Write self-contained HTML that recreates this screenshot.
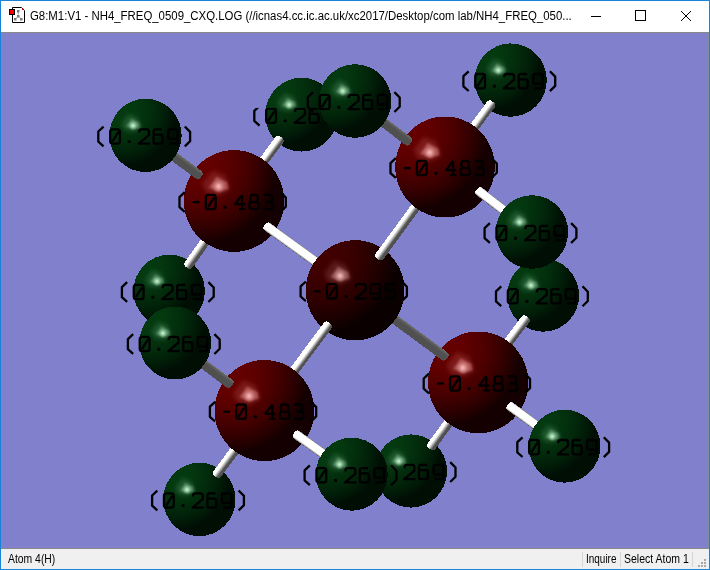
<!DOCTYPE html>
<html><head><meta charset="utf-8">
<style>
html,body{margin:0;padding:0;}
body{width:710px;height:570px;overflow:hidden;position:relative;background:#1883d7;font-family:"Liberation Sans",sans-serif;}
#title{position:absolute;left:1px;top:1px;width:708px;height:31px;background:#fff;}
#tline{position:absolute;left:1px;top:32px;width:708px;height:1px;background:#8a8a8a;}
#view{position:absolute;left:1px;top:33px;width:708px;height:515px;background:#8a8a8a;}
#view svg{position:absolute;left:1px;top:0;}
#bline{position:absolute;left:1px;top:548px;width:708px;height:1px;background:#8a8a8a;}
#status{position:absolute;left:1px;top:549px;width:708px;height:20px;background:#f0f0f0;font-size:12px;color:#000;}
.tt{position:absolute;left:29px;top:8px;font-size:12px;white-space:nowrap;color:#000;transform-origin:0 0;transform:scaleX(0.95);}
.lb path{fill:none;stroke:#000;stroke-width:2.3;stroke-linecap:butt;stroke-linejoin:round;}
.lb .dot rect{fill:#000;}
.st{position:absolute;top:3px;white-space:nowrap;transform-origin:0 0;}
.sep{position:absolute;top:3px;width:1px;height:15px;background:#d5d5d5;}
.grip{position:absolute;width:2px;height:2px;background:#a8a8a8;}
</style></head><body>
<div id="title">
 <svg style="position:absolute;left:-1px;top:-1px" width="32" height="32" viewBox="0 0 32 32">
  <path d="M12.5 7.5 H21.5 L24.5 10.5 V22.5 H12.5 Z" fill="#fff" stroke="#000" stroke-width="1"/>
  <rect x="22" y="8.5" width="1.5" height="1.5" fill="#e00"/>
  <path d="M18.2 11.5 V16 L15.2 19.2 M18.2 16 L21.3 19.2" stroke="#b0b0b0" stroke-width="1" fill="none"/>
  <rect x="17" y="10" width="2.5" height="2.5" fill="#7a7a7a"/><rect x="17" y="15" width="2.5" height="2.5" fill="#7a7a7a"/>
  <rect x="14" y="18" width="2.5" height="2.5" fill="#7a7a7a"/><rect x="20" y="18" width="2.5" height="2.5" fill="#7a7a7a"/>
  <rect x="9.5" y="9.5" width="5" height="5" fill="#f00" stroke="#000" stroke-width="1"/>
 </svg>
 <div class="tt">G8:M1:V1 - NH4_FREQ_0509_CXQ.LOG (//icnas4.cc.ic.ac.uk/xc2017/Desktop/com lab/NH4_FREQ_050...</div>
 <svg style="position:absolute;left:0;top:0" width="708" height="31">
  <path d="M590 15.5 H600" stroke="#000" stroke-width="1"/>
  <rect x="634.5" y="9.5" width="10" height="10" fill="none" stroke="#000" stroke-width="1"/>
  <path d="M680 10 L690 20 M690 10 L680 20" stroke="#000" stroke-width="1"/>
 </svg>
</div>
<div id="tline"></div>
<div id="view"><svg width="706" height="515" viewBox="2 33 706 515" style="display:block">
<defs>
<filter id="blur2" x="-50%" y="-50%" width="200%" height="200%"><feGaussianBlur stdDeviation="2.2"/></filter><filter id="blur1" x="-50%" y="-50%" width="200%" height="200%"><feGaussianBlur stdDeviation="1.3"/></filter>
<clipPath id="cpH2" clipPathUnits="userSpaceOnUse"><path clip-rule="evenodd" d="M0,0H710V570H0ZM305.5,60H410V112H305.5Z"/></clipPath>
<radialGradient id="gn" cx="0.168" cy="0.168" r="0.754" fx="0.168" fy="0.168"><stop offset="0.0" stop-color="rgb(98,0,0)"/><stop offset="0.1" stop-color="rgb(100,0,0)"/><stop offset="0.2" stop-color="rgb(98,0,0)"/><stop offset="0.3" stop-color="rgb(94,0,0)"/><stop offset="0.4" stop-color="rgb(88,0,0)"/><stop offset="0.5" stop-color="rgb(80,0,0)"/><stop offset="0.6" stop-color="rgb(71,0,0)"/><stop offset="0.7" stop-color="rgb(60,0,0)"/><stop offset="0.8" stop-color="rgb(48,0,0)"/><stop offset="0.9" stop-color="rgb(35,0,0)"/><stop offset="1.0" stop-color="rgb(20,0,0)"/></radialGradient>
<radialGradient id="gc" cx="0.168" cy="0.168" r="0.754" fx="0.168" fy="0.168"><stop offset="0.0" stop-color="rgb(63,0,0)"/><stop offset="0.1" stop-color="rgb(65,0,0)"/><stop offset="0.2" stop-color="rgb(63,0,0)"/><stop offset="0.3" stop-color="rgb(61,0,0)"/><stop offset="0.4" stop-color="rgb(56,0,0)"/><stop offset="0.5" stop-color="rgb(51,0,0)"/><stop offset="0.6" stop-color="rgb(45,0,0)"/><stop offset="0.7" stop-color="rgb(37,0,0)"/><stop offset="0.8" stop-color="rgb(29,0,0)"/><stop offset="0.9" stop-color="rgb(20,0,0)"/><stop offset="1.0" stop-color="rgb(10,0,0)"/></radialGradient>
<radialGradient id="gh" cx="0.168" cy="0.168" r="0.754" fx="0.168" fy="0.168"><stop offset="0.0" stop-color="rgb(4,57,15)"/><stop offset="0.1" stop-color="rgb(4,58,16)"/><stop offset="0.2" stop-color="rgb(4,57,15)"/><stop offset="0.3" stop-color="rgb(4,55,15)"/><stop offset="0.4" stop-color="rgb(3,51,14)"/><stop offset="0.5" stop-color="rgb(3,47,13)"/><stop offset="0.6" stop-color="rgb(2,42,11)"/><stop offset="0.7" stop-color="rgb(2,36,10)"/><stop offset="0.8" stop-color="rgb(1,30,8)"/><stop offset="0.9" stop-color="rgb(1,22,6)"/><stop offset="1.0" stop-color="rgb(0,14,4)"/></radialGradient>
<radialGradient id="sn" cx="0.5" cy="0.5" r="0.5"><stop offset="0" stop-color="#ffc0c0" stop-opacity="0.900"/><stop offset="0.2" stop-color="#ffc0c0" stop-opacity="0.765"/><stop offset="0.45" stop-color="#ffc0c0" stop-opacity="0.450"/><stop offset="0.75" stop-color="#ffc0c0" stop-opacity="0.135"/><stop offset="1.0" stop-color="#ffc0c0" stop-opacity="0.000"/></radialGradient>
<radialGradient id="sc" cx="0.5" cy="0.5" r="0.5"><stop offset="0" stop-color="#ffc8c8" stop-opacity="0.850"/><stop offset="0.2" stop-color="#ffc8c8" stop-opacity="0.722"/><stop offset="0.45" stop-color="#ffc8c8" stop-opacity="0.425"/><stop offset="0.75" stop-color="#ffc8c8" stop-opacity="0.128"/><stop offset="1.0" stop-color="#ffc8c8" stop-opacity="0.000"/></radialGradient>
<radialGradient id="sh" cx="0.5" cy="0.5" r="0.5"><stop offset="0" stop-color="#c8f8d0" stop-opacity="0.950"/><stop offset="0.2" stop-color="#c8f8d0" stop-opacity="0.807"/><stop offset="0.45" stop-color="#c8f8d0" stop-opacity="0.475"/><stop offset="0.75" stop-color="#c8f8d0" stop-opacity="0.142"/><stop offset="1.0" stop-color="#c8f8d0" stop-opacity="0.000"/></radialGradient>
<radialGradient id="sng" cx="0.5" cy="0.5" r="0.5"><stop offset="0" stop-color="#e07070" stop-opacity="0.400"/><stop offset="0.3" stop-color="#e07070" stop-opacity="0.320"/><stop offset="0.6" stop-color="#e07070" stop-opacity="0.160"/><stop offset="1.0" stop-color="#e07070" stop-opacity="0.000"/></radialGradient>
<radialGradient id="scg" cx="0.5" cy="0.5" r="0.5"><stop offset="0" stop-color="#c06060" stop-opacity="0.350"/><stop offset="0.3" stop-color="#c06060" stop-opacity="0.280"/><stop offset="0.6" stop-color="#c06060" stop-opacity="0.140"/><stop offset="1.0" stop-color="#c06060" stop-opacity="0.000"/></radialGradient>
<radialGradient id="shg" cx="0.5" cy="0.5" r="0.5"><stop offset="0" stop-color="#70b080" stop-opacity="0.450"/><stop offset="0.3" stop-color="#70b080" stop-opacity="0.360"/><stop offset="0.6" stop-color="#70b080" stop-opacity="0.180"/><stop offset="1.0" stop-color="#70b080" stop-opacity="0.000"/></radialGradient>
<g id="L269" class="lb"><path transform="translate(0.0,0)" d="M8.75,-1.8L3.5,3.1L3.5,13.2L8.75,17.9"/><path transform="translate(14.5,0)" d="M3.3,0.9L8.2,0.9Q10.65,0.9 10.65,3.3L10.65,12.8Q10.65,15.2 8.2,15.2L3.3,15.2Q0.85,15.2 0.85,12.8L0.85,3.3Q0.85,0.9 3.3,0.9ZM3,13.2L9.3,3.2"/><path transform="translate(43.5,0)" d="M0.65,4.1Q0.9,0.9 3.2,0.9L8.5,0.9Q10.65,0.9 10.65,3.3L10.65,6.7L0.5,15.2L11.6,15.2"/><path transform="translate(58.0,0)" d="M8.9,0.9L3,0.9Q0.8,0.9 0.8,3.1L0.8,13Q0.8,15.2 3,15.2L7.6,15.2Q9.8,15.2 9.8,13L9.8,8.4Q9.8,6.2 7.6,6.2L0.8,6.2"/><path transform="translate(72.5,0)" d="M10.45,10.5L3,10.5Q0.85,10.5 0.85,8.3L0.85,3.1Q0.85,0.9 3,0.9L8.3,0.9Q10.45,0.9 10.45,3.1L10.45,13Q10.45,15.2 8.3,15.2L2,15.2"/><path transform="translate(87.0,0)" d="M3,-1.9L8.3,3.5L8.3,12.8L3,18"/><g class="dot"><rect x="33.0" y="11.75" width="2.9" height="2.9" rx="0.7"/></g></g>
<g id="L483" class="lb"><path transform="translate(0.0,0)" d="M8.75,-1.8L3.5,3.1L3.5,13.2L8.75,17.9"/><path transform="translate(14.5,0)" d="M2.3,8.1L9.1,8.1"/><path transform="translate(29.0,0)" d="M3.3,0.9L8.2,0.9Q10.65,0.9 10.65,3.3L10.65,12.8Q10.65,15.2 8.2,15.2L3.3,15.2Q0.85,15.2 0.85,12.8L0.85,3.3Q0.85,0.9 3.3,0.9ZM3,13.2L9.3,3.2"/><path transform="translate(58.0,0)" d="M8.1,0.9L1,10.2L11.3,10.2M8.1,0.9L8.1,15.2M5,15.2L11.3,15.2"/><path transform="translate(72.5,0)" d="M4.3,0.9L7,0.9Q9.4,0.9 9.4,3.3L9.4,5.8Q9.4,8.2 7,8.2L4.3,8.2Q1.9,8.2 1.9,5.8L1.9,3.3Q1.9,0.9 4.3,0.9ZM3.6,8.2L7.8,8.2Q10.4,8.2 10.4,10.8L10.4,12.6Q10.4,15.2 7.8,15.2L3.6,15.2Q1,15.2 1,12.6L1,10.8Q1,8.2 3.6,8.2Z"/><path transform="translate(87.0,0)" d="M0.8,0.9L6.5,0.9Q9,0.9 9,3.4L9,5.4Q9,7.9 6.5,7.9L2.5,7.9M6.5,7.9Q10,7.9 10,10.9L10,12.4Q10,15.2 7.2,15.2L0.8,15.2"/><path transform="translate(101.5,0)" d="M3,-1.9L8.3,3.5L8.3,12.8L3,18"/><g class="dot"><rect x="47.5" y="11.75" width="2.9" height="2.9" rx="0.7"/></g></g>
<g id="L295" class="lb"><path transform="translate(0.0,0)" d="M8.75,-1.8L3.5,3.1L3.5,13.2L8.75,17.9"/><path transform="translate(14.5,0)" d="M2.3,8.1L9.1,8.1"/><path transform="translate(29.0,0)" d="M3.3,0.9L8.2,0.9Q10.65,0.9 10.65,3.3L10.65,12.8Q10.65,15.2 8.2,15.2L3.3,15.2Q0.85,15.2 0.85,12.8L0.85,3.3Q0.85,0.9 3.3,0.9ZM3,13.2L9.3,3.2"/><path transform="translate(58.0,0)" d="M0.65,4.1Q0.9,0.9 3.2,0.9L8.5,0.9Q10.65,0.9 10.65,3.3L10.65,6.7L0.5,15.2L11.6,15.2"/><path transform="translate(72.5,0)" d="M10.45,10.5L3,10.5Q0.85,10.5 0.85,8.3L0.85,3.1Q0.85,0.9 3,0.9L8.3,0.9Q10.45,0.9 10.45,3.1L10.45,13Q10.45,15.2 8.3,15.2L2,15.2"/><path transform="translate(87.0,0)" d="M11,0.9L1.6,0.9L1.6,7L8.5,7Q11,7 11,9.5L11,12.6Q11,15.2 8.5,15.2L1,15.2"/><path transform="translate(101.5,0)" d="M3,-1.9L8.3,3.5L8.3,12.8L3,18"/><g class="dot"><rect x="47.5" y="11.75" width="2.9" height="2.9" rx="0.7"/></g></g>
<g id="L269b" class="lb"><path transform="translate(43.5,0)" d="M0.65,4.1Q0.9,0.9 3.2,0.9L8.5,0.9Q10.65,0.9 10.65,3.3L10.65,6.7L0.5,15.2L11.6,15.2"/><path transform="translate(58.0,0)" d="M8.9,0.9L3,0.9Q0.8,0.9 0.8,3.1L0.8,13Q0.8,15.2 3,15.2L7.6,15.2Q9.8,15.2 9.8,13L9.8,8.4Q9.8,6.2 7.6,6.2L0.8,6.2"/><path transform="translate(72.5,0)" d="M10.45,10.5L3,10.5Q0.85,10.5 0.85,8.3L0.85,3.1Q0.85,0.9 3,0.9L8.3,0.9Q10.45,0.9 10.45,3.1L10.45,13Q10.45,15.2 8.3,15.2L2,15.2"/><path transform="translate(87.0,0)" d="M3,-1.9L8.3,3.5L8.3,12.8L3,18"/><g class="dot"></g></g>
<linearGradient id="b0" x1="0" y1="0" x2="0" y2="1"><stop offset="0.0" stop-color="rgb(80,80,80)"/><stop offset="0.1" stop-color="rgb(80,80,80)"/><stop offset="0.2" stop-color="rgb(80,80,80)"/><stop offset="0.3" stop-color="rgb(120,120,120)"/><stop offset="0.4" stop-color="rgb(171,171,171)"/><stop offset="0.5" stop-color="rgb(217,217,217)"/><stop offset="0.6" stop-color="rgb(255,255,255)"/><stop offset="0.7" stop-color="rgb(255,255,255)"/><stop offset="0.8" stop-color="rgb(255,255,255)"/><stop offset="0.9" stop-color="rgb(255,255,255)"/><stop offset="1.0" stop-color="rgb(255,255,255)"/></linearGradient>
<linearGradient id="b1" x1="0" y1="0" x2="0" y2="1"><stop offset="0.0" stop-color="rgb(255,255,255)"/><stop offset="0.1" stop-color="rgb(255,255,255)"/><stop offset="0.2" stop-color="rgb(255,255,255)"/><stop offset="0.3" stop-color="rgb(253,253,253)"/><stop offset="0.4" stop-color="rgb(216,216,216)"/><stop offset="0.5" stop-color="rgb(176,176,176)"/><stop offset="0.6" stop-color="rgb(132,132,132)"/><stop offset="0.7" stop-color="rgb(84,84,84)"/><stop offset="0.8" stop-color="rgb(80,80,80)"/><stop offset="0.9" stop-color="rgb(80,80,80)"/><stop offset="1.0" stop-color="rgb(80,80,80)"/></linearGradient>
<linearGradient id="b2" x1="0" y1="0" x2="0" y2="1"><stop offset="0.0" stop-color="rgb(80,80,80)"/><stop offset="0.1" stop-color="rgb(80,80,80)"/><stop offset="0.2" stop-color="rgb(80,80,80)"/><stop offset="0.3" stop-color="rgb(120,120,120)"/><stop offset="0.4" stop-color="rgb(171,171,171)"/><stop offset="0.5" stop-color="rgb(216,216,216)"/><stop offset="0.6" stop-color="rgb(255,255,255)"/><stop offset="0.7" stop-color="rgb(255,255,255)"/><stop offset="0.8" stop-color="rgb(255,255,255)"/><stop offset="0.9" stop-color="rgb(255,255,255)"/><stop offset="1.0" stop-color="rgb(255,255,255)"/></linearGradient>
<linearGradient id="b3" x1="0" y1="0" x2="0" y2="1"><stop offset="0.0" stop-color="rgb(255,255,255)"/><stop offset="0.1" stop-color="rgb(255,255,255)"/><stop offset="0.2" stop-color="rgb(255,255,255)"/><stop offset="0.3" stop-color="rgb(255,255,255)"/><stop offset="0.4" stop-color="rgb(218,218,218)"/><stop offset="0.5" stop-color="rgb(178,178,178)"/><stop offset="0.6" stop-color="rgb(134,134,134)"/><stop offset="0.7" stop-color="rgb(85,85,85)"/><stop offset="0.8" stop-color="rgb(80,80,80)"/><stop offset="0.9" stop-color="rgb(80,80,80)"/><stop offset="1.0" stop-color="rgb(80,80,80)"/></linearGradient>
<linearGradient id="b4" x1="0" y1="0" x2="0" y2="1"><stop offset="0.0" stop-color="rgb(114,114,114)"/><stop offset="0.1" stop-color="rgb(254,254,254)"/><stop offset="0.2" stop-color="rgb(255,255,255)"/><stop offset="0.3" stop-color="rgb(255,255,255)"/><stop offset="0.4" stop-color="rgb(255,255,255)"/><stop offset="0.5" stop-color="rgb(255,255,255)"/><stop offset="0.6" stop-color="rgb(255,255,255)"/><stop offset="0.7" stop-color="rgb(255,255,255)"/><stop offset="0.8" stop-color="rgb(255,255,255)"/><stop offset="0.9" stop-color="rgb(200,200,200)"/><stop offset="1.0" stop-color="rgb(80,80,80)"/></linearGradient>
<linearGradient id="b5" x1="0" y1="0" x2="0" y2="1"><stop offset="0.0" stop-color="rgb(80,80,80)"/><stop offset="0.1" stop-color="rgb(80,80,80)"/><stop offset="0.2" stop-color="rgb(80,80,80)"/><stop offset="0.3" stop-color="rgb(80,80,80)"/><stop offset="0.4" stop-color="rgb(80,80,80)"/><stop offset="0.5" stop-color="rgb(80,80,80)"/><stop offset="0.6" stop-color="rgb(80,80,80)"/><stop offset="0.7" stop-color="rgb(84,84,84)"/><stop offset="0.8" stop-color="rgb(91,91,91)"/><stop offset="0.9" stop-color="rgb(99,99,99)"/><stop offset="1.0" stop-color="rgb(112,112,112)"/></linearGradient>
<linearGradient id="b6" x1="0" y1="0" x2="0" y2="1"><stop offset="0.0" stop-color="rgb(80,80,80)"/><stop offset="0.1" stop-color="rgb(80,80,80)"/><stop offset="0.2" stop-color="rgb(80,80,80)"/><stop offset="0.3" stop-color="rgb(80,80,80)"/><stop offset="0.4" stop-color="rgb(80,80,80)"/><stop offset="0.5" stop-color="rgb(80,80,80)"/><stop offset="0.6" stop-color="rgb(80,80,80)"/><stop offset="0.7" stop-color="rgb(84,84,84)"/><stop offset="0.8" stop-color="rgb(92,92,92)"/><stop offset="0.9" stop-color="rgb(100,100,100)"/><stop offset="1.0" stop-color="rgb(112,112,112)"/></linearGradient>
<linearGradient id="b7" x1="0" y1="0" x2="0" y2="1"><stop offset="0.0" stop-color="rgb(113,113,113)"/><stop offset="0.1" stop-color="rgb(253,253,253)"/><stop offset="0.2" stop-color="rgb(255,255,255)"/><stop offset="0.3" stop-color="rgb(255,255,255)"/><stop offset="0.4" stop-color="rgb(255,255,255)"/><stop offset="0.5" stop-color="rgb(255,255,255)"/><stop offset="0.6" stop-color="rgb(255,255,255)"/><stop offset="0.7" stop-color="rgb(255,255,255)"/><stop offset="0.8" stop-color="rgb(255,255,255)"/><stop offset="0.9" stop-color="rgb(201,201,201)"/><stop offset="1.0" stop-color="rgb(80,80,80)"/></linearGradient>
<linearGradient id="b8" x1="0" y1="0" x2="0" y2="1"><stop offset="0.0" stop-color="rgb(255,255,255)"/><stop offset="0.1" stop-color="rgb(255,255,255)"/><stop offset="0.2" stop-color="rgb(255,255,255)"/><stop offset="0.3" stop-color="rgb(255,255,255)"/><stop offset="0.4" stop-color="rgb(218,218,218)"/><stop offset="0.5" stop-color="rgb(178,178,178)"/><stop offset="0.6" stop-color="rgb(134,134,134)"/><stop offset="0.7" stop-color="rgb(85,85,85)"/><stop offset="0.8" stop-color="rgb(80,80,80)"/><stop offset="0.9" stop-color="rgb(80,80,80)"/><stop offset="1.0" stop-color="rgb(80,80,80)"/></linearGradient>
<linearGradient id="b9" x1="0" y1="0" x2="0" y2="1"><stop offset="0.0" stop-color="rgb(80,80,80)"/><stop offset="0.1" stop-color="rgb(80,80,80)"/><stop offset="0.2" stop-color="rgb(80,80,80)"/><stop offset="0.3" stop-color="rgb(120,120,120)"/><stop offset="0.4" stop-color="rgb(171,171,171)"/><stop offset="0.5" stop-color="rgb(216,216,216)"/><stop offset="0.6" stop-color="rgb(255,255,255)"/><stop offset="0.7" stop-color="rgb(255,255,255)"/><stop offset="0.8" stop-color="rgb(255,255,255)"/><stop offset="0.9" stop-color="rgb(255,255,255)"/><stop offset="1.0" stop-color="rgb(255,255,255)"/></linearGradient>
<linearGradient id="b10" x1="0" y1="0" x2="0" y2="1"><stop offset="0.0" stop-color="rgb(80,80,80)"/><stop offset="0.1" stop-color="rgb(80,80,80)"/><stop offset="0.2" stop-color="rgb(80,80,80)"/><stop offset="0.3" stop-color="rgb(121,121,121)"/><stop offset="0.4" stop-color="rgb(172,172,172)"/><stop offset="0.5" stop-color="rgb(217,217,217)"/><stop offset="0.6" stop-color="rgb(255,255,255)"/><stop offset="0.7" stop-color="rgb(255,255,255)"/><stop offset="0.8" stop-color="rgb(255,255,255)"/><stop offset="0.9" stop-color="rgb(255,255,255)"/><stop offset="1.0" stop-color="rgb(255,255,255)"/></linearGradient>
<linearGradient id="b11" x1="0" y1="0" x2="0" y2="1"><stop offset="0.0" stop-color="rgb(255,255,255)"/><stop offset="0.1" stop-color="rgb(255,255,255)"/><stop offset="0.2" stop-color="rgb(255,255,255)"/><stop offset="0.3" stop-color="rgb(255,255,255)"/><stop offset="0.4" stop-color="rgb(219,219,219)"/><stop offset="0.5" stop-color="rgb(179,179,179)"/><stop offset="0.6" stop-color="rgb(134,134,134)"/><stop offset="0.7" stop-color="rgb(86,86,86)"/><stop offset="0.8" stop-color="rgb(80,80,80)"/><stop offset="0.9" stop-color="rgb(80,80,80)"/><stop offset="1.0" stop-color="rgb(80,80,80)"/></linearGradient>
<linearGradient id="b12" x1="0" y1="0" x2="0" y2="1"><stop offset="0.0" stop-color="rgb(80,80,80)"/><stop offset="0.1" stop-color="rgb(80,80,80)"/><stop offset="0.2" stop-color="rgb(80,80,80)"/><stop offset="0.3" stop-color="rgb(80,80,80)"/><stop offset="0.4" stop-color="rgb(80,80,80)"/><stop offset="0.5" stop-color="rgb(80,80,80)"/><stop offset="0.6" stop-color="rgb(80,80,80)"/><stop offset="0.7" stop-color="rgb(83,83,83)"/><stop offset="0.8" stop-color="rgb(90,90,90)"/><stop offset="0.9" stop-color="rgb(98,98,98)"/><stop offset="1.0" stop-color="rgb(110,110,110)"/></linearGradient>
<linearGradient id="b13" x1="0" y1="0" x2="0" y2="1"><stop offset="0.0" stop-color="rgb(107,107,107)"/><stop offset="0.1" stop-color="rgb(249,249,249)"/><stop offset="0.2" stop-color="rgb(255,255,255)"/><stop offset="0.3" stop-color="rgb(255,255,255)"/><stop offset="0.4" stop-color="rgb(255,255,255)"/><stop offset="0.5" stop-color="rgb(255,255,255)"/><stop offset="0.6" stop-color="rgb(255,255,255)"/><stop offset="0.7" stop-color="rgb(255,255,255)"/><stop offset="0.8" stop-color="rgb(255,255,255)"/><stop offset="0.9" stop-color="rgb(205,205,205)"/><stop offset="1.0" stop-color="rgb(80,80,80)"/></linearGradient>
<linearGradient id="b14" x1="0" y1="0" x2="0" y2="1"><stop offset="0.0" stop-color="rgb(80,80,80)"/><stop offset="0.1" stop-color="rgb(80,80,80)"/><stop offset="0.2" stop-color="rgb(80,80,80)"/><stop offset="0.3" stop-color="rgb(80,80,80)"/><stop offset="0.4" stop-color="rgb(80,80,80)"/><stop offset="0.5" stop-color="rgb(80,80,80)"/><stop offset="0.6" stop-color="rgb(80,80,80)"/><stop offset="0.7" stop-color="rgb(83,83,83)"/><stop offset="0.8" stop-color="rgb(91,91,91)"/><stop offset="0.9" stop-color="rgb(99,99,99)"/><stop offset="1.0" stop-color="rgb(111,111,111)"/></linearGradient>
<linearGradient id="b15" x1="0" y1="0" x2="0" y2="1"><stop offset="0.0" stop-color="rgb(115,115,115)"/><stop offset="0.1" stop-color="rgb(255,255,255)"/><stop offset="0.2" stop-color="rgb(255,255,255)"/><stop offset="0.3" stop-color="rgb(255,255,255)"/><stop offset="0.4" stop-color="rgb(255,255,255)"/><stop offset="0.5" stop-color="rgb(255,255,255)"/><stop offset="0.6" stop-color="rgb(255,255,255)"/><stop offset="0.7" stop-color="rgb(255,255,255)"/><stop offset="0.8" stop-color="rgb(254,254,254)"/><stop offset="0.9" stop-color="rgb(198,198,198)"/><stop offset="1.0" stop-color="rgb(80,80,80)"/></linearGradient>
</defs>
<rect x="2" y="33" width="706" height="515" fill="#8080cc"/>
<ellipse cx="301.5" cy="114.7" rx="36.34" ry="36.89" fill="url(#gh)" shape-rendering="crispEdges"/>
<g filter="url(#blur2)"><polygon points="284.7,93.5 277.3,103.0 280.6,109.6 289.8,111.0 297.5,107.0 293.4,96.8" fill="#509060" opacity="0.35"/></g>
<g filter="url(#blur1)"><polygon points="282.1,105.5 287.6,97.9 295.3,101.9 296.0,106.6 289.1,108.8" fill="#90c8a0" opacity="0.5"/></g>
<circle cx="289.1" cy="104.8" r="5.1" fill="url(#sh)"/>
<use href="#L269" x="250.8" y="107.7" clip-path="url(#cpH2)"/>
<g transform="translate(280.4,138.4) rotate(126.55)"><rect x="-1.5" y="-4.75" width="79.4" height="9.5" rx="3.80" fill="url(#b0)" shape-rendering="crispEdges"/></g>
<ellipse cx="169.2" cy="291" rx="35.75" ry="36.29" fill="url(#gh)" shape-rendering="crispEdges"/>
<g filter="url(#blur2)"><polygon points="152.6,270.1 145.4,279.5 148.7,286.0 157.7,287.4 165.2,283.4 161.3,273.4" fill="#509060" opacity="0.35"/></g>
<g filter="url(#blur1)"><polygon points="150.1,282.0 155.5,274.4 163.1,278.4 163.8,283.1 157.0,285.2" fill="#90c8a0" opacity="0.5"/></g>
<circle cx="157.0" cy="281.3" r="5.0" fill="url(#sh)"/>
<use href="#L269" x="118.4" y="284.0"/>
<g transform="translate(187.6,266.3) rotate(-54.60)"><rect x="-1.5" y="-4.75" width="81.6" height="9.5" rx="3.80" fill="url(#b1)" shape-rendering="crispEdges"/></g>
<ellipse cx="543.2" cy="295.2" rx="35.95" ry="36.49" fill="url(#gh)" shape-rendering="crispEdges"/>
<g filter="url(#blur2)"><polygon points="526.5,274.2 519.3,283.6 522.6,290.1 531.6,291.6 539.2,287.6 535.2,277.5" fill="#509060" opacity="0.35"/></g>
<g filter="url(#blur1)"><polygon points="524.0,286.1 529.4,278.5 537.0,282.5 537.8,287.2 530.9,289.4" fill="#90c8a0" opacity="0.5"/></g>
<circle cx="530.9" cy="285.4" r="5.1" fill="url(#sh)"/>
<use href="#L269" x="492.5" y="288.2"/>
<g transform="translate(526.5,318.0) rotate(126.84)"><rect x="-1.5" y="-4.75" width="82.0" height="9.5" rx="3.80" fill="url(#b2)" shape-rendering="crispEdges"/></g>
<ellipse cx="411" cy="471" rx="36.05" ry="36.59" fill="url(#gh)" shape-rendering="crispEdges"/>
<g filter="url(#blur2)"><polygon points="394.3,449.9 387.0,459.4 390.3,465.9 399.4,467.4 407.0,463.4 403.0,453.2" fill="#509060" opacity="0.35"/></g>
<g filter="url(#blur1)"><polygon points="391.8,461.9 397.2,454.3 404.8,458.3 405.6,463.0 398.7,465.2" fill="#90c8a0" opacity="0.5"/></g>
<circle cx="398.7" cy="461.2" r="5.1" fill="url(#sh)"/>
<use href="#L269b" x="360.2" y="464.0"/>
<g transform="translate(430.5,447.5) rotate(-53.74)"><rect x="-1.5" y="-4.75" width="82.2" height="9.5" rx="3.80" fill="url(#b3)" shape-rendering="crispEdges"/></g>
<ellipse cx="234" cy="201" rx="50.15" ry="50.90" fill="url(#gn)" shape-rendering="crispEdges"/>
<g filter="url(#blur2)"><polygon points="212.5,170.7 202.4,183.8 207.0,192.9 219.6,194.9 230.2,189.4 224.7,175.2" fill="#b04848" opacity="0.35"/></g>
<g filter="url(#blur1)"><polygon points="209.0,187.4 216.6,176.8 227.2,182.3 228.2,188.9 218.6,191.9" fill="#e89090" opacity="0.5"/></g>
<circle cx="218.6" cy="186.4" r="7.1" fill="url(#sn)"/>
<use href="#L483" x="176.0" y="194.0"/>
<g transform="translate(266.0,225.8) rotate(35.89)"><rect x="-1.5" y="-4.75" width="111.5" height="9.5" rx="3.80" fill="url(#b4)" shape-rendering="crispEdges"/></g>
<g transform="translate(200.0,175.8) rotate(-143.45)"><rect x="-1.5" y="-4.75" width="69.3" height="9.5" rx="3.80" fill="url(#b5)" shape-rendering="crispEdges"/></g>
<ellipse cx="478.25" cy="382.4" rx="50.15" ry="50.90" fill="url(#gn)" shape-rendering="crispEdges"/>
<g filter="url(#blur2)"><polygon points="456.8,352.1 446.7,365.2 451.2,374.3 463.9,376.3 474.5,370.8 468.9,356.6" fill="#b04848" opacity="0.35"/></g>
<g filter="url(#blur1)"><polygon points="453.3,368.8 460.8,358.2 471.4,363.7 472.4,370.3 462.8,373.3" fill="#e89090" opacity="0.5"/></g>
<circle cx="462.8" cy="367.8" r="7.1" fill="url(#sn)"/>
<use href="#L483" x="420.2" y="375.4"/>
<g transform="translate(446.0,357.2) rotate(-143.63)"><rect x="-1.5" y="-4.75" width="114.3" height="9.5" rx="3.80" fill="url(#b6)" shape-rendering="crispEdges"/></g>
<g transform="translate(509.0,405.5) rotate(36.20)"><rect x="-1.5" y="-4.75" width="70.3" height="9.5" rx="3.80" fill="url(#b7)" shape-rendering="crispEdges"/></g>
<ellipse cx="145.5" cy="135.4" rx="36.15" ry="36.69" fill="url(#gh)" shape-rendering="crispEdges"/>
<g filter="url(#blur2)"><polygon points="128.8,114.3 121.5,123.8 124.8,130.3 133.9,131.8 141.5,127.8 137.5,117.6" fill="#509060" opacity="0.35"/></g>
<g filter="url(#blur1)"><polygon points="126.2,126.3 131.7,118.7 139.3,122.7 140.0,127.4 133.1,129.6" fill="#90c8a0" opacity="0.5"/></g>
<circle cx="133.1" cy="125.6" r="5.1" fill="url(#sh)"/>
<use href="#L269" x="94.8" y="128.4"/>
<ellipse cx="564.55" cy="446.15" rx="35.95" ry="36.49" fill="url(#gh)" shape-rendering="crispEdges"/>
<g filter="url(#blur2)"><polygon points="547.9,425.2 540.7,434.6 543.9,441.1 553.0,442.5 560.6,438.5 556.6,428.4" fill="#509060" opacity="0.35"/></g>
<g filter="url(#blur1)"><polygon points="545.4,437.1 550.8,429.5 558.4,433.5 559.1,438.2 552.2,440.4" fill="#90c8a0" opacity="0.5"/></g>
<circle cx="552.2" cy="436.4" r="5.1" fill="url(#sh)"/>
<use href="#L269" x="513.8" y="439.1"/>
<ellipse cx="355.15" cy="290.3" rx="49.35" ry="50.10" fill="url(#gc)" shape-rendering="crispEdges"/>
<g filter="url(#blur2)"><polygon points="334.0,260.5 324.1,273.4 328.6,282.3 341.0,284.3 351.4,278.9 346.0,265.0" fill="#904848" opacity="0.35"/></g>
<g filter="url(#blur1)"><polygon points="330.5,276.9 338.0,266.4 348.4,271.9 349.4,278.4 340.0,281.4" fill="#d09090" opacity="0.5"/></g>
<circle cx="340.0" cy="275.9" r="7.0" fill="url(#sc)"/>
<use href="#L295" x="297.1" y="283.3"/>
<g transform="translate(378.5,257.8) rotate(-53.78)"><rect x="-1.5" y="-4.75" width="114.0" height="9.5" rx="3.80" fill="url(#b8)" shape-rendering="crispEdges"/></g>
<g transform="translate(328.8,324.2) rotate(126.72)"><rect x="-1.5" y="-4.75" width="109.2" height="9.5" rx="3.80" fill="url(#b9)" shape-rendering="crispEdges"/></g>
<ellipse cx="510.7" cy="80.1" rx="36.10" ry="36.64" fill="url(#gh)" shape-rendering="crispEdges"/>
<g filter="url(#blur2)"><polygon points="494.0,59.0 486.7,68.5 490.0,75.0 499.1,76.5 506.7,72.5 502.7,62.3" fill="#509060" opacity="0.35"/></g>
<g filter="url(#blur1)"><polygon points="491.4,71.0 496.9,63.4 504.5,67.4 505.2,72.1 498.3,74.3" fill="#90c8a0" opacity="0.5"/></g>
<circle cx="498.3" cy="70.3" r="5.1" fill="url(#sh)"/>
<use href="#L269" x="459.9" y="73.1"/>
<g transform="translate(492.0,103.0) rotate(126.29)"><rect x="-1.5" y="-4.75" width="80.9" height="9.5" rx="3.80" fill="url(#b10)" shape-rendering="crispEdges"/></g>
<ellipse cx="199.35" cy="499.45" rx="36.15" ry="36.69" fill="url(#gh)" shape-rendering="crispEdges"/>
<g filter="url(#blur2)"><polygon points="182.6,478.3 175.3,487.8 178.6,494.4 187.7,495.8 195.3,491.8 191.3,481.6" fill="#509060" opacity="0.35"/></g>
<g filter="url(#blur1)"><polygon points="180.1,490.4 185.5,482.7 193.2,486.7 193.9,491.4 187.0,493.6" fill="#90c8a0" opacity="0.5"/></g>
<circle cx="187.0" cy="489.6" r="5.1" fill="url(#sh)"/>
<use href="#L269" x="148.6" y="492.4"/>
<g transform="translate(216.2,475.3) rotate(-53.34)"><rect x="-1.5" y="-4.75" width="82.2" height="9.5" rx="3.80" fill="url(#b11)" shape-rendering="crispEdges"/></g>
<ellipse cx="445" cy="167" rx="49.75" ry="50.50" fill="url(#gn)" shape-rendering="crispEdges"/>
<g filter="url(#blur2)"><polygon points="423.7,136.9 413.7,150.0 418.2,159.0 430.7,161.0 441.2,155.5 435.7,141.4" fill="#b04848" opacity="0.35"/></g>
<g filter="url(#blur1)"><polygon points="420.2,153.5 427.7,143.0 438.2,148.5 439.2,155.0 429.7,158.0" fill="#e89090" opacity="0.5"/></g>
<circle cx="429.7" cy="152.5" r="7.0" fill="url(#sn)"/>
<use href="#L483" x="387.0" y="160.0"/>
<g transform="translate(409.6,142.2) rotate(-142.91)"><rect x="-1.5" y="-4.75" width="69.8" height="9.5" rx="3.80" fill="url(#b12)" shape-rendering="crispEdges"/></g>
<g transform="translate(478.0,190.4) rotate(37.66)"><rect x="-1.5" y="-4.75" width="69.6" height="9.5" rx="3.80" fill="url(#b13)" shape-rendering="crispEdges"/></g>
<ellipse cx="264.4" cy="410.55" rx="49.85" ry="50.60" fill="url(#gn)" shape-rendering="crispEdges"/>
<g filter="url(#blur2)"><polygon points="243.1,380.4 233.0,393.5 237.5,402.5 250.1,404.5 260.6,399.0 255.1,384.9" fill="#b04848" opacity="0.35"/></g>
<g filter="url(#blur1)"><polygon points="239.6,397.0 247.1,386.5 257.6,392.0 258.6,398.5 249.1,401.5" fill="#e89090" opacity="0.5"/></g>
<circle cx="249.1" cy="396.0" r="7.0" fill="url(#sn)"/>
<use href="#L483" x="206.4" y="403.6"/>
<g transform="translate(231.0,384.7) rotate(-143.23)"><rect x="-1.5" y="-4.75" width="71.2" height="9.5" rx="3.80" fill="url(#b14)" shape-rendering="crispEdges"/></g>
<g transform="translate(295.3,433.9) rotate(35.50)"><rect x="-1.5" y="-4.75" width="70.9" height="9.5" rx="3.80" fill="url(#b15)" shape-rendering="crispEdges"/></g>
<ellipse cx="355.1" cy="101" rx="36.24" ry="36.79" fill="url(#gh)" shape-rendering="crispEdges"/>
<g filter="url(#blur2)"><polygon points="338.3,79.8 331.0,89.3 334.3,95.9 343.4,97.3 351.1,93.3 347.1,83.1" fill="#509060" opacity="0.35"/></g>
<g filter="url(#blur1)"><polygon points="335.8,91.9 341.2,84.2 348.9,88.2 349.6,93.0 342.7,95.2" fill="#90c8a0" opacity="0.5"/></g>
<circle cx="342.7" cy="91.1" r="5.1" fill="url(#sh)"/>
<use href="#L269" x="304.4" y="94.0"/>
<ellipse cx="531.9" cy="232" rx="36.24" ry="36.79" fill="url(#gh)" shape-rendering="crispEdges"/>
<g filter="url(#blur2)"><polygon points="515.1,210.8 507.8,220.3 511.1,226.9 520.2,228.4 527.9,224.3 523.9,214.1" fill="#509060" opacity="0.35"/></g>
<g filter="url(#blur1)"><polygon points="512.6,222.9 518.0,215.2 525.7,219.2 526.4,224.0 519.5,226.2" fill="#90c8a0" opacity="0.5"/></g>
<circle cx="519.5" cy="222.1" r="5.1" fill="url(#sh)"/>
<use href="#L269" x="481.1" y="225.0"/>
<ellipse cx="175.2" cy="343" rx="35.95" ry="36.49" fill="url(#gh)" shape-rendering="crispEdges"/>
<g filter="url(#blur2)"><polygon points="158.5,322.0 151.3,331.4 154.6,337.9 163.6,339.4 171.2,335.4 167.2,325.3" fill="#509060" opacity="0.35"/></g>
<g filter="url(#blur1)"><polygon points="156.0,333.9 161.4,326.3 169.0,330.3 169.8,335.0 162.9,337.2" fill="#90c8a0" opacity="0.5"/></g>
<circle cx="162.9" cy="333.2" r="5.1" fill="url(#sh)"/>
<use href="#L269" x="124.4" y="336.0"/>
<ellipse cx="351.8" cy="474.2" rx="35.95" ry="36.49" fill="url(#gh)" shape-rendering="crispEdges"/>
<g filter="url(#blur2)"><polygon points="335.1,453.2 327.9,462.6 331.2,469.1 340.2,470.6 347.8,466.6 343.8,456.5" fill="#509060" opacity="0.35"/></g>
<g filter="url(#blur1)"><polygon points="332.6,465.1 338.0,457.5 345.6,461.5 346.4,466.2 339.5,468.4" fill="#90c8a0" opacity="0.5"/></g>
<circle cx="339.5" cy="464.4" r="5.1" fill="url(#sh)"/>
<use href="#L269" x="301.1" y="467.2"/>
</svg></div>
<div id="bline"></div>
<div id="status">
 <div class="st" style="left:7px;transform:scaleX(0.865)">Atom 4(H)</div>
 <div class="sep" style="left:581px"></div>
 <div class="st" style="left:585px;transform:scaleX(0.83)">Inquire</div>
 <div class="sep" style="left:619px"></div>
 <div class="st" style="left:623px;transform:scaleX(0.875)">Select Atom 1</div>
 <div class="sep" style="left:691px"></div>
 <div class="grip" style="left:703px;top:10px"></div>
 <div class="grip" style="left:700px;top:13px"></div><div class="grip" style="left:703px;top:13px"></div>
 <div class="grip" style="left:697px;top:16px"></div><div class="grip" style="left:700px;top:16px"></div><div class="grip" style="left:703px;top:16px"></div>
</div>
</body></html>
